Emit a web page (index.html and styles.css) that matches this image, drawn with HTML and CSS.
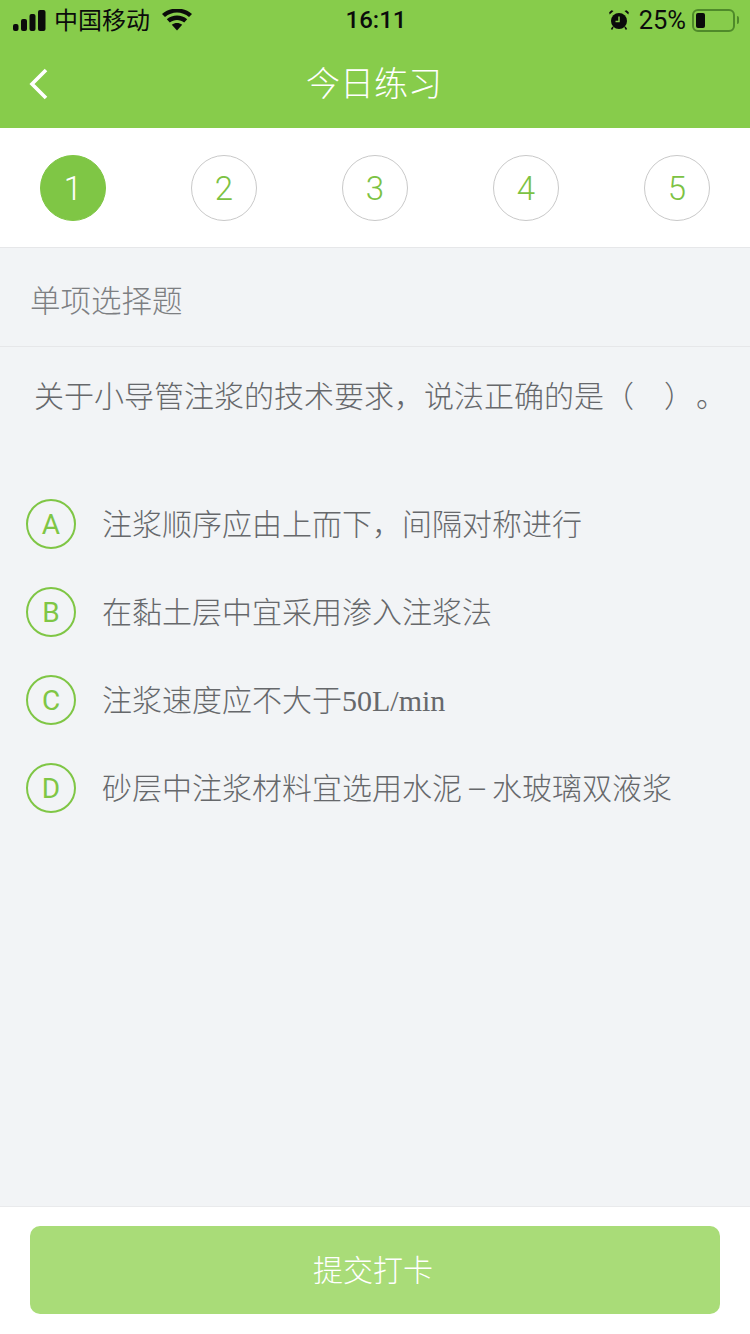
FILE: index.html
```html
<!DOCTYPE html>
<html lang="zh-CN">
<head>
  <meta charset="UTF-8" />
  <meta name="viewport" content="width=device-width, initial-scale=1.0"/>
  <title>今日练习</title>
  <link rel="stylesheet" href="styles.css">
</head>
<body>
  <div class="page">
    <header class="top">
      <div class="status">
        <div class="status-left">
          <svg class="signal" width="33" height="21" viewBox="0 0 33 21">
            <rect x="0" y="14" width="5.500" height="7" rx="2" fill="#0b0b0b"/>
            <rect x="8" y="9" width="6" height="12" rx="2" fill="#0b0b0b"/>
            <rect x="16.500" y="4" width="6" height="17" rx="2" fill="#0b0b0b"/>
            <rect x="25" y="0" width="7.500" height="21" rx="2" fill="#0b0b0b"/>
          </svg>
          <span class="carrier">中国移动</span>
          <svg class="wifi" width="30" height="22" viewBox="0 0 30 22">
            <path d="M15 21.500L9.800 15.800C12.800 13.300 17.200 13.300 20.200 15.800Z" fill="#0b0b0b"/>
            <path d="M7.800 13.600C11.800 10.100 18.200 10.100 22.200 13.600L25.200 10.300C19.400 5.300 10.600 5.300 4.800 10.300Z" fill="#0b0b0b"/>
            <path d="M3 8.100C9.900 2.100 20.100 2.100 27 8.100L30 4.900C21.500 -2.300 8.500 -2.300 0 4.900Z" fill="#0b0b0b"/>
          </svg>
        </div>
        <div class="clock">16:11</div>
        <div class="status-right">
          <svg class="alarm" width="20" height="20" viewBox="0 0 20 20">
            <circle cx="10" cy="11" r="8" fill="#0b0b0b"/>
            <path d="M10 6.500V11.500H6.500" fill="none" stroke="#87cc4b" stroke-width="1.500"/>
            <path d="M.6 4.500L4.500 1L2.500 .2L.2 2.300ZM19.400 4.500L15.500 1L17.500 .2L19.800 2.300Z" fill="#0b0b0b"/>
            <path d="M4 17L2.500 19.500M16 17L17.500 19.500" stroke="#0b0b0b" stroke-width="1.500"/>
          </svg>
          <span class="percent">25%</span>
          <div class="battery"><div class="battery-level"></div></div>
          <div class="battery-tip"></div>
        </div>
      </div>
      <div class="nav">
        <svg class="back" width="20" height="32" viewBox="0 0 20 32">
          <path d="M17 2L3 16L17 30" fill="none" stroke="#fff" stroke-width="3.600"/>
        </svg>
        <h1 class="title">今日练习</h1>
      </div>
    </header>

    <div class="steps">
      <div class="step active">1</div>
      <div class="step">2</div>
      <div class="step">3</div>
      <div class="step">4</div>
      <div class="step">5</div>
    </div>

    <main class="content">
      <div class="type">单项选择题</div>
      <div class="question">关于小导管注浆的技术要求，说法正确的是（<span class="blank"></span>）<span class="stop">。</span></div>
      <ul class="options">
        <li class="option"><span class="letter">A</span><span class="text">注浆顺序应由上而下，间隔对称进行</span></li>
        <li class="option"><span class="letter">B</span><span class="text">在黏土层中宜采用渗入注浆法</span></li>
        <li class="option"><span class="letter">C</span><span class="text">注浆速度应不大于<span class="latin">50L/min</span></span></li>
        <li class="option"><span class="letter">D</span><span class="text">砂层中注浆材料宜选用水泥<span class="dash">－</span>水玻璃双液浆</span></li>
      </ul>
    </main>

    <footer class="bottom">
      <button class="submit">提交打卡</button>
    </footer>
  </div>
</body>
</html>
```
FILE: styles.css
```css
* { box-sizing: border-box; }
body {
  margin: 0;
  font-family: "Noto Sans CJK SC", "Liberation Sans", sans-serif;
  background: #f2f4f6;
}
.page {
  width: 750px;
  height: 1334px;
  display: flex;
  flex-direction: column;
  overflow: hidden;
}

.top { height: 128px; background: #87cc4b; flex: none; }
.status {
  height: 40px;
  padding: 0 11px 0 13px;
  display: flex;
  justify-content: space-between;
  align-items: center;
  color: #0b0b0b;
  font-family: Roboto, "Liberation Sans", sans-serif;
}
.status-left, .status-right { display: flex; align-items: center; width: 220px; }
.status-right { justify-content: flex-end; }
.carrier { font-family: "Noto Sans CJK SC", sans-serif; font-size: 24px; line-height: 30px; margin-left: 8px; padding-bottom: 2px; }
.wifi { margin-left: 12px; }
.clock { font-size: 24px; font-weight: 500; }
.percent { font-size: 25.500px; margin-left: 10px; }
.battery {
  width: 43px;
  height: 23px;
  margin-left: 6px;
  padding: 2px;
  border: 2px solid #4f8a2a;
  border-radius: 6px;
}
.battery-level { width: 9px; height: 100%; background: #0b0b0b; border-radius: 2px; }
.battery-tip { width: 2px; height: 8px; margin-left: 2px; background: #4f8a2a; border-radius: 0 2px 2px 0; }

.nav {
  height: 88px;
  position: relative;
  display: flex;
  align-items: center;
  justify-content: center;
}
.back { position: absolute; left: 29px; top: 28px; }
.title { margin: 0 0 0 -2px; padding-bottom: 4px; font-size: 34px; font-weight: 300; color: #fff; line-height: 1; }

.steps {
  height: 120px;
  flex: none;
  background: #fff;
  border-bottom: 1px solid #e6e7e9;
  padding: 27px 40px 0;
  display: flex;
  justify-content: space-between;
  align-items: flex-start;
}
.step {
  width: 66px;
  height: 66px;
  border: 1px solid #c9c9c9;
  border-radius: 50%;
  color: #7cc243;
  font-family: Roboto, "Liberation Sans", sans-serif;
  font-size: 33px;
  font-weight: 300;
  display: flex;
  align-items: center;
  justify-content: center;
}
.step.active { background: #7fc645; border-color: #7fc645; color: #fff; }

.content { flex: 1; min-height: 0; }
.type {
  height: 99px;
  padding: 4px 0 0 30px;
  border-bottom: 1px solid #e6e7e9;
  display: flex;
  align-items: center;
  color: #7d7f82;
  font-size: 30.500px;
  font-weight: 300;
}
.question {
  padding: 27px 0 0 34px;
  color: #66686b;
  font-size: 30px;
  line-height: 40px;
  font-weight: 300;
  white-space: nowrap;
}
.blank { display: inline-block; width: 30px; }
.stop { margin-left: 17px; }
.options { list-style: none; margin: 0; padding: 85px 0 0 26px; }
.option { height: 88px; display: flex; align-items: flex-start; }
.letter {
  width: 50px;
  height: 50px;
  flex: none;
  border: 2px solid #7fc645;
  border-radius: 50%;
  color: #7fc645;
  font-family: Roboto, "Liberation Sans", sans-serif;
  font-size: 28px;
  display: flex;
  align-items: center;
  justify-content: center;
}
.text {
  margin-left: 26px;
  color: #66686b;
  font-size: 30px;
  line-height: 46px;
  font-weight: 300;
  white-space: nowrap;
}
.dash { display: inline-block; transform: scaleX(.72) translateY(1px); }
.latin { font-family: "Liberation Serif", serif; }

.bottom {
  height: 128px;
  flex: none;
  background: #fff;
  border-top: 1px solid #e9eaec;
  padding: 19px 30px 0;
}
.submit {
  display: block;
  width: 100%;
  height: 88px;
  padding: 0 4px 4px 0;
  border: 0;
  border-radius: 10px;
  background: #a9dc78;
  color: #fff;
  font-family: inherit;
  font-size: 30px;
  font-weight: 300;
}
```
